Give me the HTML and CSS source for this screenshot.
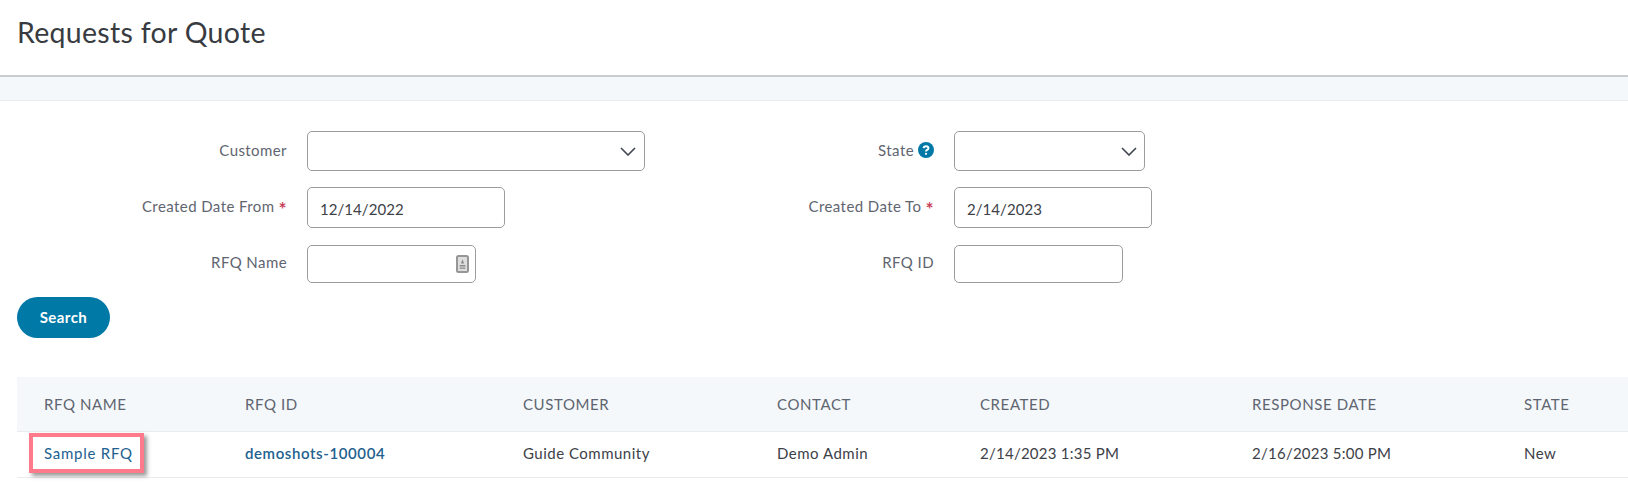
FILE: index.html
```html
<!DOCTYPE html>
<html lang="en">
<head>
<meta charset="utf-8">
<title>Requests for Quote</title>
<link rel="stylesheet" href="styles.css">
</head>
<body>
<header class="page-header"><h1 class="page-title">Requests for Quote</h1></header>
<div class="band"></div>
<main class="content">
  <form class="filters">
    <label class="label">Customer</label>
    <div class="field field-customer select-box">
      <svg class="chevron" viewBox="0 0 16 9"><path d="M1 1l7 7 7-7"/></svg>
    </div>
    <label class="label label-right">State <svg class="help" viewBox="0 0 16 16"><circle cx="8" cy="8" r="8"/><path class="help-mark" d="M5.6 6.2C5.7 4.9 6.7 4.2 8 4.2c1.4 0 2.4.8 2.4 2 0 1.8-2.4 1.7-2.4 3.2"/><circle class="help-dot" cx="8" cy="11.8" r="1.1"/></svg></label>
    <div class="field field-state select-box">
      <svg class="chevron" viewBox="0 0 16 9"><path d="M1 1l7 7 7-7"/></svg>
    </div>

    <label class="label">Created Date From <span class="req">*</span></label>
    <div class="field field-date">12/14/2022</div>
    <label class="label label-right">Created Date To <span class="req">*</span></label>
    <div class="field field-date-to">2/14/2023</div>

    <label class="label label-short">RFQ Name</label>
    <div class="field field-name">
      <svg class="card" viewBox="0 0 13 18"><rect x="1" y="1" width="11" height="16" rx="1.5"/><path d="M6.5 4.2l1.6 4.4H4.9zM3.6 10h5.8v1.4H3.6zM3.6 12.4h5.8v1.4H3.6z"/></svg>
    </div>
    <label class="label label-short label-right">RFQ ID</label>
    <div class="field field-id"></div>
  </form>
  <button class="search" type="button">Search</button>
  <table class="results">
    <colgroup>
      <col class="c1"><col class="c2"><col class="c3"><col class="c4"><col class="c5"><col class="c6"><col class="c7">
    </colgroup>
    <thead>
      <tr><th>RFQ NAME</th><th>RFQ ID</th><th>CUSTOMER</th><th>CONTACT</th><th>CREATED</th><th>RESPONSE DATE</th><th>STATE</th></tr>
    </thead>
    <tbody>
      <tr>
        <td class="name-cell"><a class="link link-wide" href="#">Sample RFQ</a><span class="callout"></span></td>
        <td><a class="link link-strong" href="#">demoshots-100004</a></td>
        <td class="wide">Guide Community</td>
        <td class="wide">Demo Admin</td>
        <td>2/14/2023 1:35 PM</td>
        <td>2/16/2023 5:00 PM</td>
        <td class="wide">New</td>
      </tr>
    </tbody>
  </table>
</main>
</body>
</html>
```

FILE: styles.css
```css
* { box-sizing: border-box; }
html, body { margin: 0; padding: 0; background: #fff; }
body { width: 1628px; height: 494px; overflow: hidden; font-family: "Lato", "Noto Sans", sans-serif; font-size: 15px; color: #3a3f47; }

.page-header { height: 77px; padding: 14px 17px 0; background: #fff; border-bottom: 2px solid #c9cccf; }
.page-title { margin: 0; font-size: 28.5px; line-height: 36px; font-weight: 400; color: #383b41; letter-spacing: 0.3px; }
.band { height: 24px; background: #f4f8fb; border-bottom: 1px solid #e9edf0; }

.content { padding: 30px 0 0 17px; }
.filters { display: grid; grid-template-columns: 270px 479px 128px 1fr; grid-template-rows: 40px 41px 39px; column-gap: 20px; row-gap: 16px; }
.label { display: flex; justify-content: flex-end; align-items: center; gap: 4px; height: 38px; font-size: 15px; letter-spacing: 0.42px; color: #5f6570; white-space: nowrap; }
.label-short { height: 35px; }
.req { color: #c8425a; font-size: 19px; line-height: 1; font-weight: 700; height: 14px; }
.help { width: 16px; height: 16px; flex: none; }
.help circle:first-child { fill: #0079a6; }
.help-mark { fill: none; stroke: #fff; stroke-width: 2; }
.help-dot { fill: #fff; }

.field { display: flex; align-items: center; height: 40px; padding: 2px 12px 0; background: #fff; border: 1px solid #9c9c9c; border-radius: 5px; font-size: 15px; letter-spacing: 0.05px; color: #3d4148; }
.select-box { justify-content: flex-end; padding: 0 7px 0 0; height: 40px; }
.field-customer { width: 338px; padding-right: 8px; }
.field-state { width: 191px; }
.field-date { width: 198px; height: 41px; }
.field-date-to { width: 198px; height: 41px; }
.field-name { width: 169px; height: 38px; margin-top: 1px; justify-content: flex-end; padding: 0 6px 0 0; }
.field-id { width: 169px; height: 38px; margin-top: 1px; }
.chevron { width: 16px; height: 9px; fill: none; stroke: #3f4650; stroke-width: 1.6; }
.card { width: 13px; height: 18px; }
.card rect { fill: #dedede; stroke: #969696; stroke-width: 2; }
.card path { fill: #8a8a8a; }

.search { display: block; width: 93px; height: 41px; margin-top: 14px; padding: 0 0 2px; border: 0; border-radius: 21px; background: #0079a6; color: #fff; font: 700 15px "Lato", "Noto Sans", sans-serif; letter-spacing: 0.45px; }

.results { width: 1611px; margin-top: 39px; border-collapse: collapse; table-layout: fixed; }
.c1 { width: 201px; } .c2 { width: 278px; } .c3 { width: 254px; } .c4 { width: 203px; } .c5 { width: 272px; } .c6 { width: 272px; } .c7 { width: 131px; }
.results th { height: 54px; padding: 0 0 0 27px; background: #f4f8fb; border-bottom: 1px solid #e8ecef; text-align: left; font-size: 15px; font-weight: 400; letter-spacing: 0.6px; color: #5f6570; }
.results td { height: 46px; padding: 0 0 2px 27px; border-bottom: 1px solid #e8ecef; font-size: 15px; letter-spacing: 0.25px; color: #3d4148; }
.results td.wide { letter-spacing: 0.5px; }
.link { color: #22618f; text-decoration: none; }
.link-wide { letter-spacing: 0.75px; }
.link-strong { font-weight: 600; letter-spacing: 0.6px; }
.name-cell { position: relative; }
.callout { position: absolute; left: 12px; top: 1px; width: 115px; height: 40px; border: 4px solid #ff7a8a; box-shadow: 3px 3px 4px rgba(70,70,70,.55); pointer-events: none; }
```
